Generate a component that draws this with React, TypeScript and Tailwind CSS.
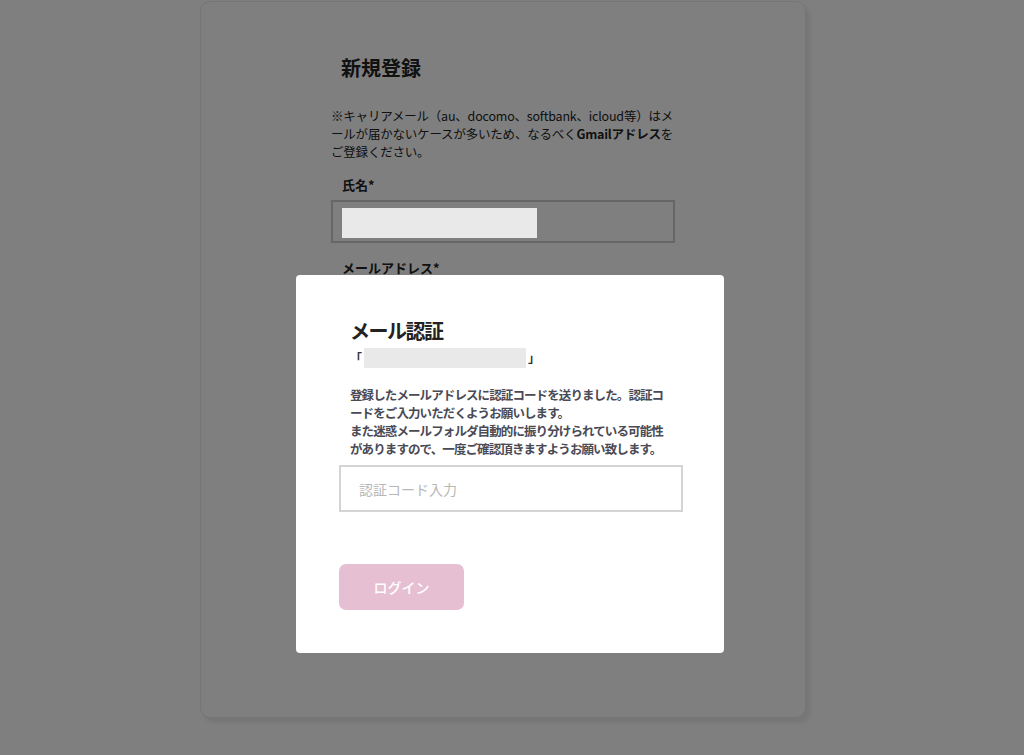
export default function App() {
  const font = { fontFamily: '"Noto Sans CJK JP", "Noto Sans", sans-serif' }

  return (
    <div className="relative min-h-[755px] bg-white text-[#222]" style={font}>
      {/* Registration card behind the modal */}
      <div className="pt-px pl-[200px]">
        <div className="h-[717px] w-[606px] rounded-[10px] border border-[#eaeaea] bg-white shadow-[4px_5px_4px_rgba(0,0,0,0.08)]">
          <div className="mx-auto w-[344px] pt-[52px]">
            <h1 className="pl-[10px] text-[20px] font-bold leading-[28px]">新規登録</h1>
            <p className="mt-[25px] whitespace-nowrap text-[12.5px] leading-[18px] tracking-[-0.2px] text-[#222]">
              ※キャリアメール（au、docomo、softbank、icloud等）はメ
              <br />
              ールが届かないケースが多いため、なるべく
              <span className="font-bold">Gmailアドレス</span>を
              <br />
              ご登録ください。
            </p>
            <div className="mt-[15px] pl-[11px] text-[13px] font-bold leading-[18px]">氏名*</div>
            <div className="mt-[6px] h-[43px] border-2 border-[#cccccc] bg-white px-[9px] pt-[6px]">
              <div className="relative z-[60] h-[30px] w-[195px] bg-[#e9e9e9]" />
            </div>
            <div className="mt-[16px] pl-[11px] text-[13px] font-bold leading-[18px]">メールアドレス*</div>
          </div>
        </div>
      </div>

      {/* Overlay + modal */}
      <div className="fixed inset-0 z-50 flex justify-center bg-black/50 pr-[4px] pt-[275px]">
        <div className="h-[378px] w-[428px] rounded-[4px] bg-white px-[43px] pt-[42px]">
          <div className="pl-[11px]">
            <h2 className="text-[20px] font-bold leading-[28px] tracking-[-1.5px] text-[#222]">メール認証</h2>
            <div className="mt-[3px] flex items-center text-[12px] font-bold leading-[20px] text-[#333]">
              <span className="w-[14px]">「</span>
              <span className="h-[20px] w-[162px] bg-[#e9e9e9]" />
              <span className="ml-[2px]">」</span>
            </div>
            <p className="mt-[18px] whitespace-nowrap text-[12.5px] font-bold leading-[18px] tracking-[-0.9px] text-[#4a4a55]">
              登録したメールアドレスに認証コードを送りました。認証コ
              <br />
              ードをご入力いただくようお願いします。
              <br />
              また迷惑メールフォルダ自動的に振り分けられている可能性
              <br />
              がありますので、一度ご確認頂きますようお願い致します。
            </p>
          </div>
          <input
            placeholder="認証コード入力"
            className="mt-[7px] block h-[47px] w-[344px] border-2 border-[#d4d4d4] pl-[18px] text-[14px] text-[#333] outline-none placeholder:text-[#b8b8b8]"
            style={font}
          />
          <button
            className="mt-[52px] h-[46px] w-[125px] rounded-[7px] bg-[#e6bfd2] text-[14px] font-medium text-white"
            style={font}
          >
            ログイン
          </button>
        </div>
      </div>
    </div>
  )
}
